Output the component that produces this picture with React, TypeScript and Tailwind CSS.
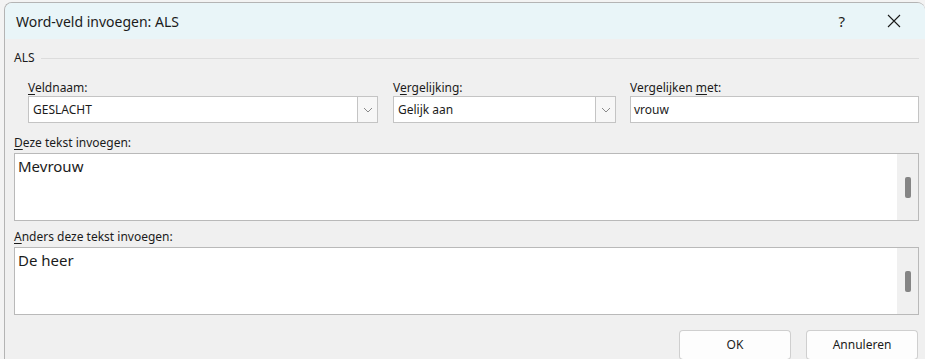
const Key = ({ children }: { children: string }) => <span className="underline underline-offset-2">{children}</span>;

const Chevron = () => (
  <svg width="10" height="6" viewBox="0 0 10 6" fill="none">
    <path d="M1 1l4 4 4-4" stroke="#8a8a8a" strokeWidth="1" />
  </svg>
);

const Combo = ({ value }: { value: string }) => (
  <div className="flex h-[27px] border border-[#c4c4c4] bg-white">
    <div className="flex-1 flex items-center pl-[4px] text-[12px] text-[#1b1b1b]">{value}</div>
    <div className="w-[20px] flex items-center justify-center border-l border-[#c4c4c4] bg-[#f7f7f7]">
      <Chevron />
    </div>
  </div>
);

const TextArea = ({ value }: { value: string }) => (
  <div className="flex h-[68px] border border-[#b9b9b9] bg-white">
    <div className="flex-1 pl-[3px] pt-[2px] text-[15px] leading-[20px] text-[#1b1b1b]">{value}</div>
    <div className="w-[21px] bg-[#f0f0f0] flex items-center justify-center">
      <div className="w-[6px] h-[21px] rounded-[2px] bg-[#858585]" />
    </div>
  </div>
);

export default function App() {
  return (
    <div
      className="w-[925px] h-[359px] overflow-hidden bg-[#f3f3f3] pl-[4px] pt-[2px]"
      style={{ fontFamily: '"Noto Sans", "Open Sans", sans-serif' }}
    >
      <div className="h-full rounded-t-[8px] border-l border-t border-[#b4b4b4] bg-[#f0f0f0] overflow-hidden">
        <div className="h-[36px] bg-[#e9f5f8] flex items-center pl-[11px] pr-[24px] text-[14px] text-[#1b1b1b]">
          <span className="flex-1">Word-veld invoegen: ALS</span>
          <span className="text-[15px] mr-[42px]">?</span>
          <svg width="14" height="14" viewBox="0 0 14 14">
            <path d="M1 1l12 12M13 1L1 13" stroke="#1b1b1b" strokeWidth="1.1" />
          </svg>
        </div>

        <div className="pl-[9px] pr-[6px] pt-[12px] text-[12px] text-[#1b1b1b]">
          <div className="flex items-center gap-[6px] h-[14px]">
            <span>ALS</span>
            <div className="flex-1 h-px bg-[#dcdcdc]" />
          </div>

          <div className="flex pl-[14px] mt-[15px]">
            <div className="w-[350px]">
              <div className="h-[15px] leading-[15px]"><Key>V</Key>eldnaam:</div>
              <div className="mt-[1px]"><Combo value="GESLACHT" /></div>
            </div>
            <div className="w-[223px] ml-[15px]">
              <div className="h-[15px] leading-[15px]">V<Key>e</Key>rgelijking:</div>
              <div className="mt-[1px]"><Combo value="Gelijk aan" /></div>
            </div>
            <div className="flex-1 ml-[14px]">
              <div className="h-[15px] leading-[15px]">Vergelijken <Key>m</Key>et:</div>
              <div className="mt-[1px] h-[27px] border border-[#c4c4c4] bg-white flex items-center pl-[3px]">vrouw</div>
            </div>
          </div>

          <div className="mt-[12px] h-[16px] leading-[16px]"><Key>D</Key>eze tekst invoegen:</div>
          <div className="mt-[2px]"><TextArea value="Mevrouw" /></div>

          <div className="mt-[8px] h-[16px] leading-[16px]"><Key>A</Key>nders deze tekst invoegen:</div>
          <div className="mt-[2px]"><TextArea value="De heer" /></div>

          <div className="flex justify-end gap-[15px] mt-[15px] pr-[1px]">
            <button className="w-[112px] h-[30px] rounded-[4px] border border-[#cfcfcf] border-b-[#b5b5b5] bg-[#fdfdfd] text-[12px]">OK</button>
            <button className="w-[112px] h-[30px] rounded-[4px] border border-[#cfcfcf] border-b-[#b5b5b5] bg-[#fdfdfd] text-[12px]">Annuleren</button>
          </div>
        </div>
      </div>
    </div>
  );
}
